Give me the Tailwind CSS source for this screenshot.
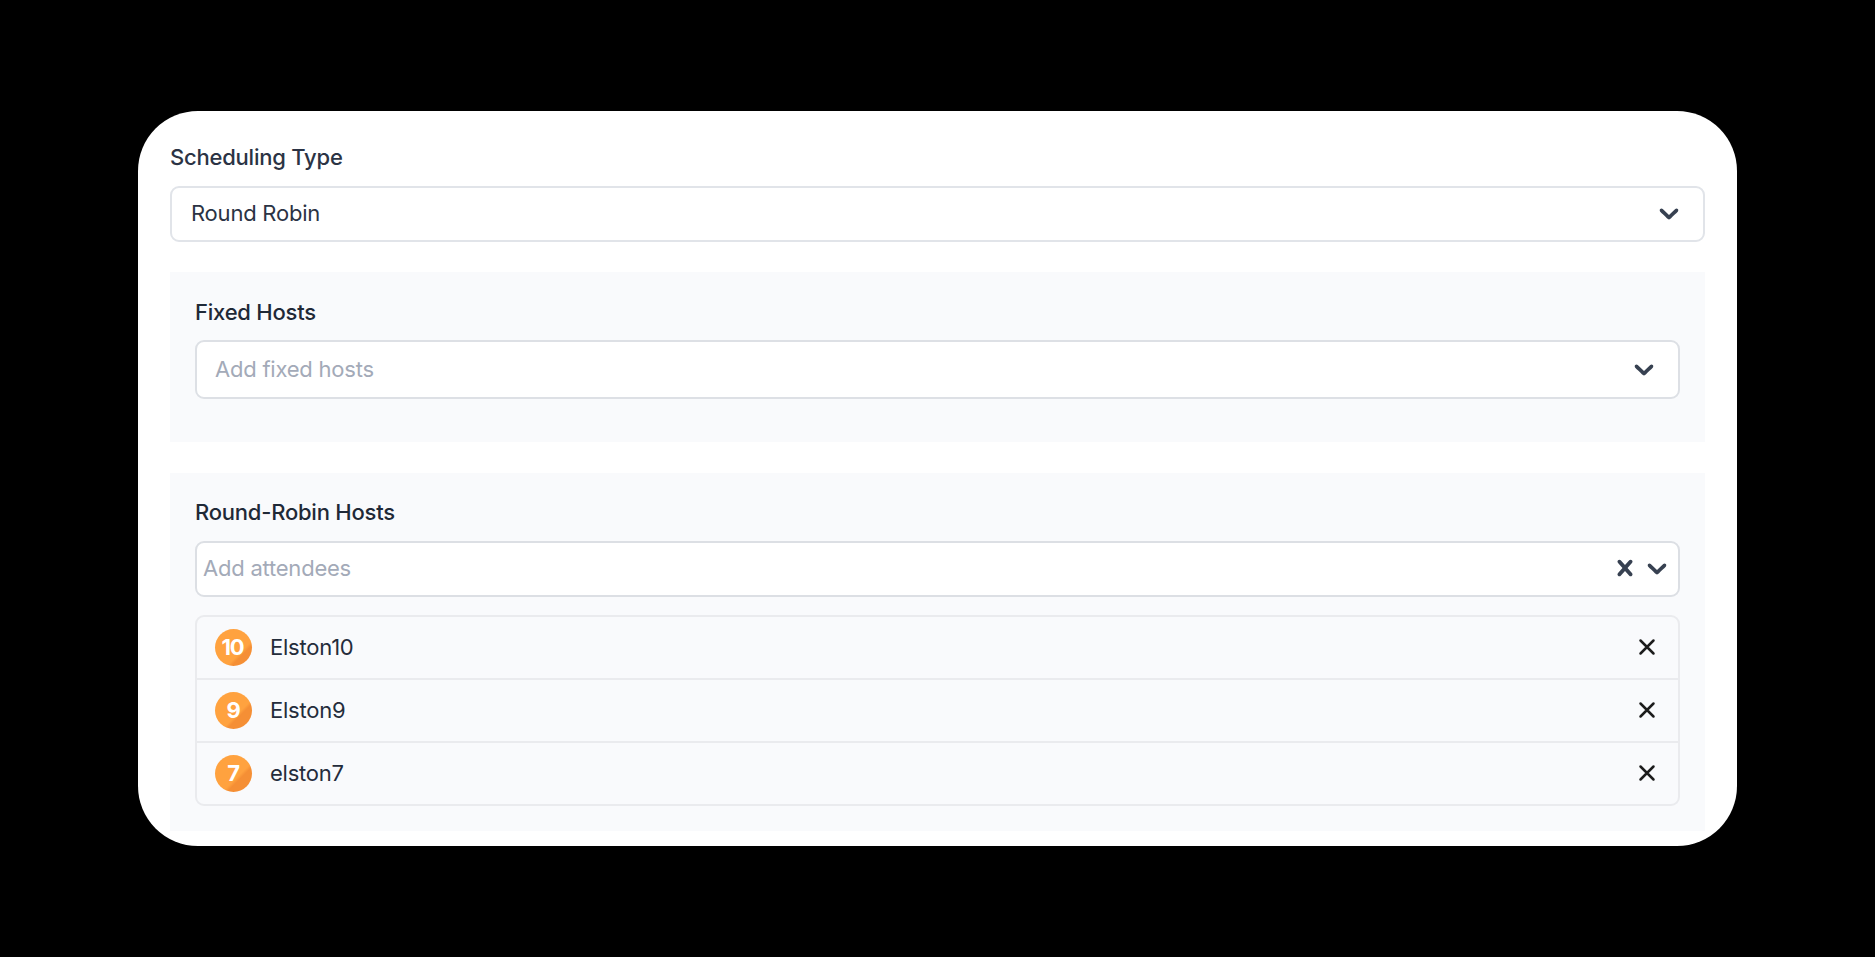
<!DOCTYPE html>
<html lang="en">
<head>
  <meta charset="UTF-8" />
  <meta name="viewport" content="width=device-width, initial-scale=1.0" />
  <title>Scheduling Type</title>
  <script src="https://cdn.jsdelivr.net/npm/@tailwindcss/browser@4"></script>
</head>
<body class="bg-black font-['Inter',sans-serif] text-[22px] leading-7 tracking-[-0.22px] text-[#2b3344]">
  <!-- Shared icons -->
  <svg class="hidden">
    <symbol id="chevron" viewBox="0 0 20 20">
      <path d="M4.516 7.548c0.436-0.446 1.043-0.481 1.576 0l3.908 3.747 3.908-3.747c0.533-0.481 1.141-0.446 1.574 0 0.436 0.445 0.408 1.197 0 1.615-0.406 0.418-4.695 4.502-4.695 4.502-0.217 0.223-0.502 0.335-0.787 0.335s-0.57-0.112-0.789-0.335c0 0-4.287-4.084-4.695-4.502s-0.436-1.17 0-1.615z" />
    </symbol>
    <symbol id="clear" viewBox="0 0 20 20">
      <path d="M14.348 14.849c-0.469 0.469-1.229 0.469-1.697 0l-2.651-3.030-2.651 3.029c-0.469 0.469-1.229 0.469-1.697 0-0.469-0.469-0.469-1.229 0-1.697l2.758-3.15-2.759-3.152c-0.469-0.469-0.469-1.228 0-1.697s1.228-0.469 1.697 0l2.652 3.031 2.651-3.031c0.469-0.469 1.228-0.469 1.697 0s0.469 1.229 0 1.697l-2.758 3.152 2.758 3.15c0.469 0.469 0.469 1.229 0 1.698z" />
    </symbol>
    <symbol id="remove" viewBox="0 0 24 24">
      <path d="M18 6 6 18M6 6l12 12" fill="none" stroke="currentColor" stroke-width="2.3" stroke-linecap="round" stroke-linejoin="round" />
    </symbol>
  </svg>

  <div class="pt-[111px] pl-[138px]">
    <main class="h-[735px] w-[1599px] rounded-[60px] bg-white px-8 pt-8">
      <!-- Scheduling type -->
      <label class="block font-medium">Scheduling Type</label>
      <div class="mt-[15px] flex h-[56px] items-center justify-between rounded-[9px] border-2 border-[#e1e4e9] pr-[18px] pb-[2px] pl-[19px]">
        <span>Round Robin</span>
        <svg class="size-[32px] fill-[#374151]"><use href="#chevron" /></svg>
      </div>

      <!-- Fixed hosts -->
      <section class="mt-[30px] h-[170px] bg-[#f9fafc] px-[25px] pt-[26px]">
        <h2 class="font-medium text-[#1f2937]">Fixed Hosts</h2>
        <div class="mt-[14px] flex h-[59px] items-center justify-between rounded-[9px] border-2 border-[#dde0e5] bg-white pr-[18px] pb-px pl-[18px]">
          <span class="text-[#a3aab8]">Add fixed hosts</span>
          <svg class="size-[32px] fill-[#374151]"><use href="#chevron" /></svg>
        </div>
      </section>

      <!-- Round-robin hosts -->
      <section class="mt-[31px] h-[358px] bg-[#f9fafc] px-[25px] pt-[25px]">
        <h2 class="font-medium text-[#1f2937]">Round-Robin Hosts</h2>
        <div class="mt-[15px] flex h-[56px] items-center justify-between rounded-[9px] border-2 border-[#dcdfe4] bg-white pr-[5px] pb-[2px] pl-[6px]">
          <span class="text-[#a3aab8]">Add attendees</span>
          <div class="flex">
            <svg class="size-[32px] fill-[#374151]"><use href="#clear" /></svg>
            <svg class="size-[32px] fill-[#374151]"><use href="#chevron" /></svg>
          </div>
        </div>

        <ul class="mt-[18px] divide-y-2 divide-[#eaebee] rounded-[9px] border-2 border-[#eaebee]">
          <li class="flex h-[63px] items-center px-[18px] pb-px">
            <span class="flex size-[37px] items-center justify-center rounded-full bg-linear-135 from-[#ffa23f] from-66% to-[#f58f35] to-72% pr-[2px] font-bold tracking-[-1.2px] text-white">10</span>
            <span class="ml-[18px] flex-1 text-[#242c3b]">Elston10</span>
            <svg class="size-[26px] text-[#1c1c1c]"><use href="#remove" /></svg>
          </li>
          <li class="flex h-[63px] items-center px-[18px] pb-px">
            <span class="flex size-[37px] items-center justify-center rounded-full bg-linear-135 from-[#ffa23f] from-60% to-[#f58f35] to-66% font-bold text-white">9</span>
            <span class="ml-[18px] flex-1 text-[#242c3b]">Elston9</span>
            <svg class="size-[26px] text-[#1c1c1c]"><use href="#remove" /></svg>
          </li>
          <li class="flex h-[61px] items-center px-[18px] pb-px">
            <span class="flex size-[37px] items-center justify-center rounded-full bg-linear-135 from-[#ffa23f] from-60% to-[#f58f35] to-66% font-bold text-white">7</span>
            <span class="ml-[18px] flex-1 text-[#242c3b]">elston7</span>
            <svg class="size-[26px] text-[#1c1c1c]"><use href="#remove" /></svg>
          </li>
        </ul>
      </section>
    </main>
  </div>
</body>
</html>
